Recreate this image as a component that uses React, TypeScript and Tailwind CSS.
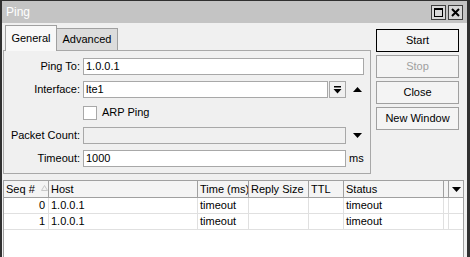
import React from 'react';

const Tri = ({ up = false }: { up?: boolean }) => (
  <svg width="9" height="5" viewBox="0 0 9 5">
    <path d={up ? 'M0 5h9L4.5 0z' : 'M0 0h9L4.5 5z'} fill="#000" />
  </svg>
);

const columns = [
  { name: 'Seq #', w: 'w-[45px]' },
  { name: 'Host', w: 'w-[149px]' },
  { name: 'Time (ms)', w: 'w-[51px]' },
  { name: 'Reply Size', w: 'w-[60px]' },
  { name: 'TTL', w: 'w-[35px]' },
  { name: 'Status', w: 'w-[100px]' },
  { name: '', w: 'w-[5px]' },
];

const rows = [
  { seq: 0, host: '1.0.0.1', time: 'timeout', size: '', ttl: '', status: 'timeout' },
  { seq: 1, host: '1.0.0.1', time: 'timeout', size: '', ttl: '', status: 'timeout' },
];

const Field = ({
  label,
  children,
}: {
  label: string;
  children: React.ReactNode;
}) => (
  <div className="flex items-center h-[17px]">
    <div className="w-[76px] text-right">{label}</div>
    <div className="ml-[3px] flex items-center">{children}</div>
  </div>
);

const Btn = ({ label, strong = false, disabled = false }: { label: string; strong?: boolean; disabled?: boolean }) => (
  <div
    className={`w-[83px] h-[23px] flex items-center justify-center bg-[#f4f4f4] border ${
      strong ? 'border-black' : 'border-[#a0a0a0]'
    } ${disabled ? 'text-[#a0a0a0]' : 'text-black'}`}
  >
    {label}
  </div>
);

export default function App() {
  return (
    <div className="w-[470px] h-[257px] overflow-hidden flex flex-col border-l-2 border-r-[3px] border-t border-[#303030] bg-[#f0f0f0] text-[11px] text-black font-['Liberation_Sans',Arial,sans-serif]">
      {/* title bar */}
      <div className="h-[22px] shrink-0 bg-[#c4c4c4] flex items-center justify-between pl-[4px] pr-[4px]">
        <span className="text-white text-[12px]">Ping</span>
        <div className="flex gap-[2px]">
          <div className="w-[15px] h-[15px] border border-[#404040] bg-[#d8d8d8] flex items-center justify-center">
            <div className="w-[9px] h-[9px] border border-black border-t-2" />
          </div>
          <div className="w-[15px] h-[15px] border border-[#404040] bg-[#d8d8d8] flex items-center justify-center">
            <svg width="9" height="9" viewBox="0 0 9 9">
              <path d="M1 1l7 7M8 1l-7 7" stroke="#000" strokeWidth="2" />
            </svg>
          </div>
        </div>
      </div>

      <div className="flex shrink-0">
        {/* left: tabs + form */}
        <div className="ml-[1px] w-[368px]">
          <div className="h-[27px] flex items-end pl-[2px]">
            <div className="relative z-10 -mb-[1px] h-[26px] w-[52px] bg-[#f8f8f8] border border-b-0 border-[#a0a0a0] flex items-center justify-center pb-[1px]">
              General
            </div>
            <div className="h-[22px] w-[61px] bg-[#dcdcdc] border border-l-0 border-b-0 border-[#a0a0a0] flex items-center justify-center">
              Advanced
            </div>
          </div>
          <div className="h-[124px] border border-[#a8a8a8] pt-[7px] flex flex-col gap-[6px]">
            <Field label="Ping To:">
              <div className="w-[281px] h-[17px] bg-white border border-[#a8a8a8] pl-[2px] leading-[15px]">1.0.0.1</div>
            </Field>
            <Field label="Interface:">
              <div className="w-[245px] h-[17px] bg-white border border-[#a8a8a8] pl-[2px] leading-[15px]">lte1</div>
              <div className="ml-[1px] w-[17px] h-[17px] border border-[#a8a8a8] flex flex-col items-center justify-center gap-[1px]">
                <svg width="9" height="9" viewBox="0 0 9 9">
                  <path d="M1 1h7v1.5H1z" fill="#000" />
                  <path d="M0.5 4h8L4.5 8.5z" fill="#000" />
                </svg>
              </div>
              <div className="ml-[7px]">
                <Tri up />
              </div>
            </Field>
            <div className="flex items-center h-[17px] pl-[79px]">
              <div className="w-[14px] h-[14px] bg-white border border-[#a8a8a8]" />
              <span className="ml-[5px]">ARP Ping</span>
            </div>
            <Field label="Packet Count:">
              <div className="w-[263px] h-[17px] bg-[#f0f0f0] border border-[#a8a8a8]" />
              <div className="ml-[7px]">
                <Tri />
              </div>
            </Field>
            <Field label="Timeout:">
              <div className="w-[263px] h-[17px] bg-white border border-[#a8a8a8] pl-[2px] leading-[15px]">1000</div>
              <span className="ml-[3px]">ms</span>
            </Field>
          </div>
        </div>

        {/* right: buttons */}
        <div className="ml-[5px] pt-[6px] flex flex-col gap-[3px]">
          <Btn label="Start" strong />
          <Btn label="Stop" disabled />
          <Btn label="Close" />
          <Btn label="New Window" />
        </div>
      </div>

      {/* table */}
      <div className="mt-[6px] ml-[1px] w-[461px] flex-1 flex flex-col border-l border-r border-[#a0a0a0] bg-white">
        <div className="h-[18px] flex border-t border-b border-[#a0a0a0] bg-[#f4f4f4]">
          {columns.map((c, i) => (
            <div
              key={i}
              className={`${c.w} shrink-0 border-r border-[#a0a0a0] pl-[2px] flex items-center whitespace-nowrap overflow-hidden`}
            >
              {c.name}
              {i === 0 && (
                <svg width="7" height="6" viewBox="0 0 7 6" className="ml-[6px] mb-[2px]">
                  <path d="M0.5 5.5h6L3.5 0.5z" fill="none" stroke="#c8c8c8" />
                </svg>
              )}
            </div>
          ))}
          <div className="flex-1 flex items-center justify-center">
            <Tri />
          </div>
        </div>
        {rows.map((r) => (
          <div key={r.seq} className="h-[16px] flex border-b border-[#e0e0e0]">
            <div className="w-[45px] shrink-0 border-r border-[#e0e0e0] text-right pr-[3px] leading-[15px]">{r.seq}</div>
            <div className="w-[149px] shrink-0 border-r border-[#e0e0e0] pl-[2px] leading-[15px]">{r.host}</div>
            <div className="w-[51px] shrink-0 border-r border-[#e0e0e0] pl-[2px] leading-[15px] overflow-hidden whitespace-nowrap">{r.time}</div>
            <div className="w-[60px] shrink-0 border-r border-[#e0e0e0] pl-[2px] leading-[15px]">{r.size}</div>
            <div className="w-[35px] shrink-0 border-r border-[#e0e0e0] pl-[2px] leading-[15px]">{r.ttl}</div>
            <div className="w-[100px] shrink-0 border-r border-[#e0e0e0] pl-[2px] leading-[15px]">{r.status}</div>
            <div className="w-[5px] shrink-0 border-r border-[#e0e0e0]" />
            <div className="flex-1" />
          </div>
        ))}
      </div>
    </div>
  );
}
